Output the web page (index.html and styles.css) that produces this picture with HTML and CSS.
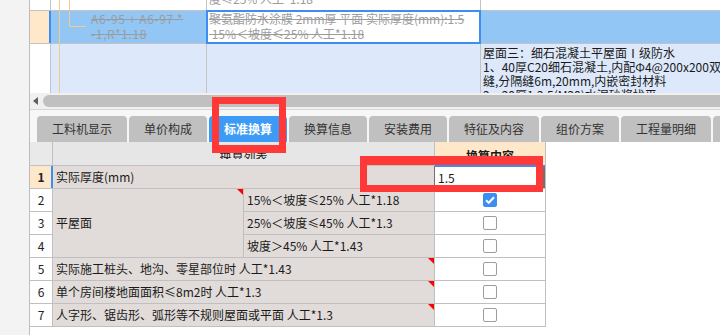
FILE: index.html
```html
<!DOCTYPE html>
<html lang="zh">
<head>
<meta charset="utf-8">
<title>标准换算</title>
<link rel="stylesheet" href="styles.css">
</head>
<body>
<div class="app">
  <div class="strip"></div>
  <div class="main">
    <div class="top-grid">
      <div class="tc"></div>
      <div class="tc tree tree-r1"></div>
      <div class="tc clip-top"><span class="del">度≤25% 人工*1.18</span></div>
      <div class="tc"></div>

      <div class="tc num-sel"></div>
      <div class="tc sel tree tree-sel"><span class="conn"></span><span class="del code">A6-95 + A6-97 *<br>-1,R*1.18</span></div>
      <div class="tc edit"><span class="del">聚氨酯防水涂膜 2mm厚 平面 实际厚度(mm):1.5<br>&nbsp;15%＜坡度≤25% 人工*1.18</span></div>
      <div class="tc sel"></div>

      <div class="tc"></div>
      <div class="tc lb tree"></div>
      <div class="tc lb"></div>
      <div class="tc lb desc">屋面三：细石混凝土平屋面Ⅰ级防水<br>1、40厚C20细石混凝土,内配Φ4@200x200双向<br>缝,分隔缝6m,20mm,内嵌密封材料<br>2、20厚1:2.5(M20)水泥砂浆找平</div>
    </div>

    <div class="hscroll"><span class="arrow"></span><span class="thumb"></span></div>

    <div class="tabs">
      <div class="tab">工料机显示</div>
      <div class="tab">单价构成</div>
      <div class="tab active">标准换算</div>
      <div class="tab">换算信息</div>
      <div class="tab">安装费用</div>
      <div class="tab">特征及内容</div>
      <div class="tab">组价方案</div>
      <div class="tab">工程量明细</div>
      <div class="tab">反查图形工程量</div>
    </div>

    <div class="bt">
      <div class="h hn"></div>
      <div class="h span2"><span>换算列表</span></div>
      <div class="h hc"><span>换算内容</span></div>

      <div class="n n-sel">1</div>
      <div class="d span2">实际厚度(mm)</div>
      <div class="v input">1.5</div>

      <div class="n">2</div>
      <div class="d rows3 tri">平屋面</div>
      <div class="d">15%＜坡度≤25% 人工*1.18</div>
      <div class="v"><span class="cb on"><svg width="10" height="8" viewBox="0 0 10 8"><path d="M1 4.2 L3.8 6.8 L9 1.3" stroke="#fff" stroke-width="2" fill="none"/></svg></span></div>

      <div class="n">3</div>
      <div class="d">25%＜坡度≤45% 人工*1.3</div>
      <div class="v"><span class="cb"></span></div>

      <div class="n">4</div>
      <div class="d">坡度＞45% 人工*1.43</div>
      <div class="v"><span class="cb"></span></div>

      <div class="n">5</div>
      <div class="d span2 tri">实际施工桩头、地沟、零星部位时 人工*1.43</div>
      <div class="v"><span class="cb"></span></div>

      <div class="n">6</div>
      <div class="d span2 tri">单个房间楼地面面积≤8m2时 人工*1.3</div>
      <div class="v"><span class="cb"></span></div>

      <div class="n">7</div>
      <div class="d span2 tri">人字形、锯齿形、弧形等不规则屋面或平面 人工*1.3</div>
      <div class="v"><span class="cb"></span></div>
    </div>
  </div>
</div>
<div class="hl hl-tab"></div>
<div class="hl hl-input"></div>
</body>
</html>
```
FILE: styles.css
```css
body {
  margin: 0;
  width: 720px;
  height: 335px;
  overflow: hidden;
  position: relative;
  background: #fff;
  color: #1a1a1a;
  font-family: "Noto Sans CJK SC", "Noto Sans", sans-serif;
  font-size: 12px;
}
.app { display: flex; height: 335px; }
.strip {
  flex: none;
  width: 29px;
  background: #f3f3f3;
  border-right: 1px solid #bdbdbd;
}
.main { flex: 1; min-width: 0; display: flex; flex-direction: column; }

/* top grid */
.top-grid {
  display: grid;
  grid-template-columns: 20px 155px 273px 1fr;
  grid-template-rows: 10px 32px 49px;
  gap: 1px;
  background: #c3c3c3;
}
.tc {
  background-color: #fff;
  overflow: hidden;
  white-space: nowrap;
  line-height: 15px;
}
.del { color: #9c9c9c; text-decoration: line-through; }
.clip-top {
  display: flex;
  align-items: flex-end;
  padding: 0 0 4px 2px;
}
.tree {
  background-image: linear-gradient(#f6c98d, #f6c98d);
  background-size: 1px 100%;
  background-position: 8px 0;
  background-repeat: no-repeat;
}
.tree-r1 {
  background-image: linear-gradient(#f6c98d, #f6c98d), linear-gradient(#f6c98d, #f6c98d);
  background-position: 8px 0, 18px 0;
}
.num-sel { background-color: #ffe7c9; }
.sel { background-color: #92c7f5; }
.tree-sel {
  display: flex;
  align-items: flex-start;
  box-shadow: -2px 0 0 #3d8ef0;
}
.conn {
  flex: none;
  width: 17px;
  height: 16px;
  margin-left: 18px;
  border-left: 1px solid #f6c98d;
  border-bottom: 1px solid #f6c98d;
  box-sizing: border-box;
}
.code { margin-left: 5px; letter-spacing: 0.6px; }
.edit {
  padding-left: 2px;
  box-shadow: 0 0 0 1px #3d8ef0, inset 0 0 0 1px #3d8ef0;
}
.lb { background-color: #dde9fb; }
.desc { padding: 2px 0 0 2px; line-height: 14px; }

/* scrollbar */
.hscroll {
  height: 16px;
  display: flex;
  align-items: center;
  padding-left: 3px;
  background: #f0f0f0;
  border-bottom: 1px solid #d6d6d6;
}
.arrow {
  width: 0;
  height: 0;
  border-style: solid;
  border-width: 4px 5px 4px 0;
  border-color: transparent #5f5f5f transparent transparent;
}
.thumb {
  flex: 1;
  height: 12px;
  margin-left: 5px;
  background: #c0c0c0;
  border-radius: 6px 0 0 6px;
}

/* tabs */
.tabs {
  height: 32px;
  display: flex;
  align-items: flex-end;
  gap: 2px;
  padding-left: 7px;
  background: #f7f7f7;
  overflow: hidden;
  white-space: nowrap;
}
.tab {
  flex: none;
  height: 26px;
  line-height: 26px;
  padding: 0 15px;
  background: #c0c0c0;
  border-radius: 4px 4px 0 0;
  color: #333;
}
.tab.active { background: #3d9bf6; color: #fff; font-weight: bold; }

/* bottom table */
.bt {
  align-self: flex-start;
  display: grid;
  grid-template-columns: 22px 190px 190px 110px;
  grid-template-rows: 23px repeat(7, 22px);
  gap: 1px;
  padding: 0 1px 1px 0;
  background: #c0c0c0;
}
.h { background: #e6e6e6; overflow: hidden; text-align: center; }
.h span {
  display: block;
  height: 10px;
  margin-top: 7px;
  overflow: hidden;
  line-height: 13px;
}
.hn { background: #e9e9e9; }
.hc { background: #ffe7c9; font-weight: bold; }
.span2 { grid-column: span 2; }
.n { background: #fff; text-align: center; line-height: 22px; color: #222; }
.n-sel {
  background: #ffe7c9;
  font-weight: bold;
  box-shadow: inset -1px 0 #3d8ef0, 1px 0 #3d8ef0;
}
.d {
  position: relative;
  background: #e1dcd9;
  line-height: 22px;
  padding-left: 3px;
  white-space: nowrap;
}
.rows3 { grid-row: span 3; display: flex; align-items: center; }
.tri::after {
  content: "";
  position: absolute;
  top: 0;
  right: 0;
  border-style: solid;
  border-width: 0 6px 6px 0;
  border-color: transparent #f00 transparent transparent;
}
.v { background: #fff; display: flex; align-items: center; justify-content: center; }
.input {
  justify-content: flex-start;
  padding-left: 3px;
  box-shadow: 0 -1px #3d8ef0, inset 0 1px #3d8ef0, -1px 0 #707070, inset -2px 0 #707070;
}
.cb {
  width: 14px;
  height: 14px;
  box-sizing: border-box;
  border: 1.5px solid #9d9d9d;
  border-radius: 2px;
  background: #fff;
}
.cb.on {
  display: flex;
  align-items: center;
  justify-content: center;
  background: #3d8ef2;
  border-color: #3d8ef2;
}

/* red annotation frames */
.hl {
  position: absolute;
  box-sizing: border-box;
  border: 7px solid #ff3838;
}
.hl-tab { left: 212px; top: 97px; width: 74px; height: 56px; border-bottom-width: 8px; }
.hl-input { left: 360px; top: 156px; width: 183px; height: 36px; border-top-width: 9px; }
```
